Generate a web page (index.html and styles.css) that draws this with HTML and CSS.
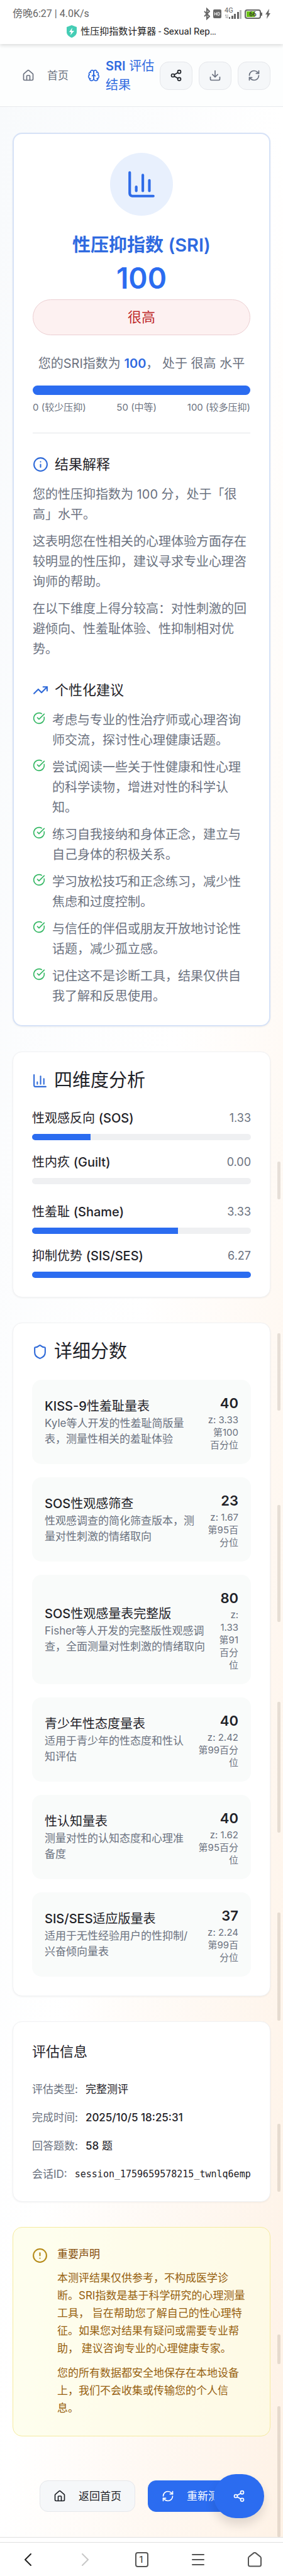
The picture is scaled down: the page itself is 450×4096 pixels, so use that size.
FILE: index.html
```
<!DOCTYPE html>
<html lang="zh-CN">
<head>
<meta charset="utf-8">
<meta name="viewport" content="width=device-width, initial-scale=1">
<title>性压抑指数计算器 - Sexual Repression Index</title>
<link rel="stylesheet" href="styles.css">
</head>
<body>
<svg class="sprite" aria-hidden="true">
  <symbol id="i-home" viewBox="0 0 24 24"><path d="M15 21v-8a1 1 0 0 0-1-1h-4a1 1 0 0 0-1 1v8"/><path d="M3 10a2 2 0 0 1 .709-1.528l7-5.999a2 2 0 0 1 2.582 0l7 5.999A2 2 0 0 1 21 10v9a2 2 0 0 1-2 2H5a2 2 0 0 1-2-2z"/></symbol>
  <symbol id="i-brain" viewBox="0 0 24 24"><path d="M12 5a3 3 0 1 0-5.997.125 4 4 0 0 0-2.526 5.77 4 4 0 0 0 .556 6.588A4 4 0 1 0 12 18Z"/><path d="M12 5a3 3 0 1 1 5.997.125 4 4 0 0 1 2.526 5.77 4 4 0 0 1-.556 6.588A4 4 0 1 1 12 18Z"/><path d="M15 13a4.5 4.5 0 0 1-3-4 4.5 4.5 0 0 1-3 4"/><path d="M17.599 6.5a3 3 0 0 0 .399-1.375"/><path d="M6.003 5.125A3 3 0 0 0 6.401 6.5"/><path d="M3.477 10.896a4 4 0 0 1 .585-.396"/><path d="M19.938 10.5a4 4 0 0 1 .585.396"/><path d="M6 18a4 4 0 0 1-1.967-.516"/><path d="M19.967 17.484A4 4 0 0 1 18 18"/></symbol>
  <symbol id="i-share" viewBox="0 0 24 24"><circle cx="18" cy="5" r="3"/><circle cx="6" cy="12" r="3"/><circle cx="18" cy="19" r="3"/><path d="M8.59 13.51l6.83 3.98M15.41 6.51l-6.82 3.98"/></symbol>
  <symbol id="i-download" viewBox="0 0 24 24"><path d="M12 15V3"/><path d="M21 15v4a2 2 0 0 1-2 2H5a2 2 0 0 1-2-2v-4"/><path d="m7 10 5 5 5-5"/></symbol>
  <symbol id="i-refresh" viewBox="0 0 24 24"><path d="M3 12a9 9 0 0 1 9-9 9.75 9.75 0 0 1 6.74 2.74L21 8"/><path d="M21 3v5h-5"/><path d="M21 12a9 9 0 0 1-9 9 9.75 9.75 0 0 1-6.74-2.74L3 16"/><path d="M8 16H3v5"/></symbol>
  <symbol id="i-chart" viewBox="0 0 24 24"><path d="M3 3v16a2 2 0 0 0 2 2h16"/><path d="M18 17V9"/><path d="M13 17V5"/><path d="M8 17v-3"/></symbol>
  <symbol id="i-info" viewBox="0 0 24 24"><circle cx="12" cy="12" r="10"/><path d="M12 16v-4M12 8h.01"/></symbol>
  <symbol id="i-alert" viewBox="0 0 24 24"><circle cx="12" cy="12" r="10"/><path d="M12 8v4M12 16h.01"/></symbol>
  <symbol id="i-trend" viewBox="0 0 24 24"><path d="M16 7h6v6"/><path d="m22 7-8.500 8.500-5-5L2 17"/></symbol>
  <symbol id="i-check" viewBox="0 0 24 24"><path d="M21.801 10A10 10 0 1 1 17 3.335"/><path d="m9 11 3 3L22 4"/></symbol>
  <symbol id="i-shield" viewBox="0 0 24 24"><path d="M20 13c0 5-3.5 7.5-7.66 8.95a1 1 0 0 1-.67-.01C7.5 20.5 4 18 4 13V6a1 1 0 0 1 1-1c2 0 4.5-1.2 6.24-2.72a1.17 1.17 0 0 1 1.52 0C14.51 3.81 17 5 19 5a1 1 0 0 1 1 1z"/></symbol>
</svg>

<header class="browser">
  <div class="status">
    <span>傍晚6:27 | 4.0K/s</span>
    <span class="status-icons">
      <svg width="10" height="20" viewBox="0 0 10 20" fill="none" stroke="#666" stroke-width="2"><path d="M1 6l8 8-4 4V2l4 4-8 8"/></svg>
      <svg width="13" height="14" viewBox="0 0 13 14"><rect width="13" height="14" rx="2" fill="#666"/><path d="M2.500 4.500v5M2.500 7h3M5.500 4.500v5M7.500 4.500v5h1c1.500 0 2-1 2-2.500s-.5-2.500-2-2.500z" fill="none" stroke="#fff" stroke-width="1"/></svg>
      <span class="signal"><small>4G</small><svg width="27" height="16" viewBox="0 0 27 16" fill="#666"><path d="M1 10l1.500-2v6M5 8v6l-1.500-2" fill="none" stroke="#aaa"/><rect x="7" y="12" width="2" height="3"/><rect x="11" y="10" width="3" height="5"/><rect x="15" y="7" width="3" height="8"/><rect x="20" y="4" width="3" height="11"/><rect x="24" y="1" width="3" height="14" fill="#bbb"/></svg></span>
      <span class="battery"><b>66</b></span>
      <svg width="8" height="16" viewBox="0 0 8 16" fill="#666"><path d="M6 0L0 9h3l-1 7 6-9H5z"/></svg>
    </span>
  </div>
  <div class="tab-title">
    <svg width="16" height="20" viewBox="0 0 16 20"><path d="M8 0l8 3v8c0 4-3 7-8 9-5-2-8-5-8-9V3z" fill="#45cdb5"/><path d="M9 4l-5 7h3l-1 5 6-7H8z" fill="#fff"/></svg>
    <span>性压抑指数计算器 - Sexual Rep…</span>
  </div>
</header>

<nav class="nav">
  <a class="nav-home" href="#"><svg class="icon"><use href="#i-home"/></svg><span>首页</span></a>
  <div class="brand"><svg class="icon"><use href="#i-brain"/></svg><span><b>SRI</b> 评估结果</span></div>
  <div class="tools">
    <button class="tool dark" type="button" aria-label="分享"><svg class="icon"><use href="#i-share"/></svg></button>
    <button class="tool" type="button" aria-label="下载"><svg class="icon"><use href="#i-download"/></svg></button>
    <button class="tool" type="button" aria-label="重新测评"><svg class="icon"><use href="#i-refresh"/></svg></button>
  </div>
</nav>

<main class="page">
  <section class="card hero">
    <div class="hero-icon"><svg class="icon xl"><use href="#i-chart"/></svg></div>
    <h1>性压抑指数 (SRI)</h1>
    <div class="score">100</div>
    <div class="level">很高</div>
    <p class="summary">您的SRI指数为 <strong>100</strong>， 处于 很高 水平</p>
    <div class="bar big"><div class="fill" style="width:100%"></div></div>
    <div class="scale"><span>0 (较少压抑)</span><span>50 (中等)</span><span>100 (较多压抑)</span></div>
    <hr>
    <h2 class="sub"><svg class="icon lg"><use href="#i-info"/></svg>结果解释</h2>
    <div class="prose">
      <p>您的性压抑指数为 100 分，处于「很高」水平。</p>
      <p>这表明您在性相关的心理体验方面存在较明显的性压抑，建议寻求专业心理咨询师的帮助。</p>
      <p>在以下维度上得分较高：对性刺激的回避倾向、性羞耻体验、性抑制相对优势。</p>
    </div>
    <h2 class="sub"><svg class="icon lg"><use href="#i-trend"/></svg>个性化建议</h2>
    <ul class="tips">
      <li><svg class="icon"><use href="#i-check"/></svg><span>考虑与专业的性治疗师或心理咨询师交流，探讨性心理健康话题。</span></li>
      <li><svg class="icon"><use href="#i-check"/></svg><span>尝试阅读一些关于性健康和性心理的科学读物，增进对性的科学认知。</span></li>
      <li><svg class="icon"><use href="#i-check"/></svg><span>练习自我接纳和身体正念，建立与自己身体的积极关系。</span></li>
      <li><svg class="icon"><use href="#i-check"/></svg><span>学习放松技巧和正念练习，减少性焦虑和过度控制。</span></li>
      <li><svg class="icon"><use href="#i-check"/></svg><span>与信任的伴侣或朋友开放地讨论性话题，减少孤立感。</span></li>
      <li><svg class="icon"><use href="#i-check"/></svg><span>记住这不是诊断工具，结果仅供自我了解和反思使用。</span></li>
    </ul>
  </section>

  <section class="card">
    <h2 class="title"><svg class="icon lg"><use href="#i-chart"/></svg>四维度分析</h2>
    <div class="groups">
      <div class="group">
        <div class="dim"><div class="dim-head"><span>性观感反向 <b>(SOS)</b></span><em>1.33</em></div><div class="bar"><div class="fill" style="width:26.6%"></div></div></div>
        <div class="dim"><div class="dim-head"><span>性内疚 <b>(Guilt)</b></span><em>0.00</em></div><div class="bar"><div class="fill" style="width:0%"></div></div></div>
      </div>
      <div class="group">
        <div class="dim"><div class="dim-head"><span>性羞耻 <b>(Shame)</b></span><em>3.33</em></div><div class="bar"><div class="fill" style="width:66.6%"></div></div></div>
        <div class="dim"><div class="dim-head"><span>抑制优势 <b>(SIS/SES)</b></span><em>6.27</em></div><div class="bar"><div class="fill" style="width:100%"></div></div></div>
      </div>
    </div>
  </section>

  <section class="card">
    <h2 class="title"><svg class="icon lg"><use href="#i-shield"/></svg>详细分数</h2>
    <div class="scales">
      <article class="item"><div class="item-text"><h3><b>KISS-9</b>性羞耻量表</h3><p>Kyle等人开发的性羞耻简版量<br>表，测量性相关的羞耻体验</p></div><div class="item-score"><strong>40</strong><span>z: 3.33<br>第100<br>百分位</span></div></article>
      <article class="item"><div class="item-text"><h3><b>SOS</b>性观感筛查</h3><p>性观感调查的简化筛查版本，测<br>量对性刺激的情绪取向</p></div><div class="item-score"><strong>23</strong><span>z: 1.67<br>第95百<br>分位</span></div></article>
      <article class="item"><div class="item-text"><h3><b>SOS</b>性观感量表完整版</h3><p>Fisher等人开发的完整版性观感调<br>查，全面测量对性刺激的情绪取向</p></div><div class="item-score"><strong>80</strong><span>z:<br>1.33<br>第91<br>百分<br>位</span></div></article>
      <article class="item"><div class="item-text"><h3>青少年性态度量表</h3><p>适用于青少年的性态度和性认<br>知评估</p></div><div class="item-score"><strong>40</strong><span>z: 2.42<br>第99百分<br>位</span></div></article>
      <article class="item"><div class="item-text"><h3>性认知量表</h3><p>测量对性的认知态度和心理准<br>备度</p></div><div class="item-score"><strong>40</strong><span>z: 1.62<br>第95百分<br>位</span></div></article>
      <article class="item"><div class="item-text"><h3><b>SIS/SES</b>适应版量表</h3><p>适用于无性经验用户的性抑制/<br>兴奋倾向量表</p></div><div class="item-score"><strong>37</strong><span>z: 2.24<br>第99百<br>分位</span></div></article>
    </div>
  </section>

  <section class="card">
    <h2 class="info-title">评估信息</h2>
    <dl class="info">
      <div><dt>评估类型:</dt><dd>完整测评</dd></div>
      <div><dt>完成时间:</dt><dd><b>2025/10/5 18:25:31</b></dd></div>
      <div><dt>回答题数:</dt><dd><b>58</b> 题</dd></div>
      <div><dt>会话ID:</dt><dd class="mono">session_1759659578215_twnlq6emp</dd></div>
    </dl>
  </section>

  <section class="card notice">
    <svg class="icon lg"><use href="#i-alert"/></svg>
    <div class="notice-body">
      <h3>重要声明</h3>
      <p>本测评结果仅供参考，不构成医学诊<br>断。SRI指数是基于科学研究的心理测量<br>工具， 旨在帮助您了解自己的性心理特<br>征。如果您对结果有疑问或需要专业帮<br>助， 建议咨询专业的心理健康专家。</p>
      <p>您的所有数据都安全地保存在本地设备<br>上，我们不会收集或传输您的个人信<br>息。</p>
    </div>
  </section>

  <div class="actions">
    <button class="btn" type="button"><svg class="icon"><use href="#i-home"/></svg>返回首页</button>
    <button class="btn primary" type="button"><svg class="icon"><use href="#i-refresh"/></svg>重新测评</button>
    <button class="fab" type="button" aria-label="分享结果"><svg class="icon"><use href="#i-share"/></svg></button>
  </div>
</main>

<footer class="toolbar">
  <button type="button" aria-label="后退"><svg width="24" height="24" viewBox="0 0 24 24" stroke="#222"><path d="M16 3L7 12l9 9"/></svg></button>
  <button type="button" aria-label="前进"><svg width="24" height="24" viewBox="0 0 24 24" stroke="#c8c8c8"><path d="M8 3l9 9-9 9"/></svg></button>
  <button type="button" aria-label="标签页"><span class="tabs">1</span></button>
  <button type="button" aria-label="菜单"><svg width="24" height="24" viewBox="0 0 24 24" stroke="#555"><path d="M3 4h18M3 12h18M3 20h18"/></svg></button>
  <button type="button" aria-label="主页"><svg width="24" height="24" viewBox="0 0 24 24" stroke="#555"><path d="M2 9.500c0-1 .3-1.500 1-2.100l7.500-6c1-.8 2-.8 3 0l7.500 6c.7.600 1 1.100 1 2.100V20c0 1.700-1 2.500-2.500 2.500h-15C3 22.500 2 21.700 2 20z"/></svg></button>
</footer>

<div class="thumb t1"></div><div class="thumb t2"></div><div class="thumb t3"></div><div class="thumb t4"></div>
<div class="thumb t5"></div><div class="thumb t6"></div><div class="thumb t7"></div><div class="thumb t8"></div>
</body>
</html>
```
FILE: styles.css
```
* { box-sizing: border-box; margin: 0; padding: 0; }

body {
  position: relative;
  background: #fff;
  color: #1f2228;
  font: 400 20px/32px Inter, "Noto Sans CJK SC", sans-serif;
}

button { font: inherit; color: inherit; border: 0; background: none; }
h1, h2, h3 { font-weight: 400; }
b { font-weight: 500; }

.sprite { display: none; }
.icon { width: 20px; height: 20px; flex: none; fill: none; stroke: currentColor; stroke-width: 2; stroke-linecap: round; stroke-linejoin: round; }
.icon.lg { width: 25px; height: 25px; }
.icon.xl { width: 50px; height: 50px; }

/* browser chrome */
.browser {
  position: relative;
  padding: 8px 20px 6px;
  background: #fff;
  box-shadow: 0 2px 6px rgba(0, 0, 0, .15);
  font: 400 15px/28px Roboto, "Noto Sans CJK SC", sans-serif;
}
.status { display: flex; justify-content: space-between; align-items: center; color: #666; font-size: 16px; }
.status-icons { display: flex; align-items: center; gap: 5px; }
.signal { position: relative; display: flex; align-items: flex-end; height: 18px; }
.signal small { position: absolute; left: 0; top: -2px; font-size: 11px; line-height: 11px; }
.battery {
  position: relative;
  width: 26px; height: 15px; margin-right: 2px;
  border: 2px solid #666; border-radius: 4px;
  background: linear-gradient(90deg, #6cc417 64%, #fff 64%);
  box-shadow: inset 0 0 0 1px #fff;
  text-align: center;
}
.battery::after { content: ""; position: absolute; right: -4px; top: 3px; width: 2px; height: 5px; background: #666; }
.battery b { display: block; font-size: 10px; line-height: 11px; color: #333; }
.tab-title { display: flex; justify-content: center; align-items: center; gap: 6px; font-size: 15px; color: #222; }

.nav {
  display: flex; align-items: center;
  padding: 20px 20px 19px 35px;
  border-bottom: 1px solid #e8eaed;
  background: #fdfefe;
}
.nav-home { display: flex; align-items: center; gap: 20px; color: #6b7280; font-size: 17px; text-decoration: none; white-space: nowrap; }
.brand { display: flex; align-items: center; gap: 9px; margin-left: 30px; flex: 1; color: #2f6be0; line-height: 30px; }
.brand b { font-weight: 600; }
.tools { display: flex; gap: 10px; }
.tool {
  display: flex; align-items: center; justify-content: center;
  width: 52px; height: 45px;
  border: 1px solid #e5e7eb; border-radius: 14px;
  background: #f5f7f9; color: #6b7280;
}
.tool.dark { color: #1f2228; }

.page {
  display: flex; flex-direction: column; gap: 40px;
  padding: 41px 20px 40px;
  background: linear-gradient(to bottom right, #f8fafc, #fff 50%, #fef2e6);
}

.card {
  padding: 30px;
  border: 1px solid #f1f2f4; border-radius: 15px;
  background: #fff;
  box-shadow: 0 1px 3px rgba(0, 0, 0, .06);
}
.card.hero { border: 2px solid #d6e2f7; }

.hero-icon { display: flex; align-items: center; justify-content: center; width: 100px; height: 100px; margin: 0 auto 30px; border-radius: 50%; background: #e8f0fd; color: #2f6ce8; }
h1 { font-size: 29px; line-height: 34px; font-weight: 600; text-align: center; color: #2f6ae0; }
.score { margin-top: 10px; font-size: 46px; line-height: 50px; font-weight: 600; text-align: center; color: #2b6cf0; }
.level { margin-top: 9px; padding: 11px; border: 1px solid #eccfd2; border-radius: 29px; background: #fdf1f1; color: #bf2c2c; font-size: 22px; line-height: 33px; text-align: center; }
.summary { margin-top: 29px; text-align: center; color: #6b7280; white-space: nowrap; }
.summary strong { font-weight: 600; color: #2f6ae0; }
.bar { height: 10px; border-radius: 5px; background: #eff0f2; overflow: hidden; }
.bar.big { height: 15px; margin-top: 19px; border-radius: 8px; }
.fill { height: 100%; background: #2b6cf0; }
.scale { display: flex; justify-content: space-between; margin-top: 10px; font-size: 15px; line-height: 20px; color: #6b7280; }
hr { margin: 30px 0 0; border: 0; border-top: 1px solid #e3e5e9; }
.sub { display: flex; align-items: center; gap: 10px; margin-top: 34px; font-size: 22px; line-height: 30px; }
.sub .icon, .title .icon { color: #2f6ad8; }
.prose { display: flex; flex-direction: column; gap: 11px; margin-top: 17px; color: #6b7280; }
.tips { display: flex; flex-direction: column; gap: 11px; margin-top: 17px; list-style: none; color: #6b7280; }
.tips li { display: flex; gap: 11px; }
.tips .icon { margin-top: 3px; color: #36b865; }

.title { display: flex; align-items: center; gap: 10px; margin-bottom: 30px; font-size: 29px; line-height: 30px; }
.groups { display: flex; flex-direction: column; gap: 29px; }
.group { display: flex; flex-direction: column; gap: 20px; }
.dim { display: flex; flex-direction: column; gap: 10px; }
.dim-head { display: flex; justify-content: space-between; line-height: 30px; }
.dim-head em { font-style: normal; font-size: 18px; color: #6b7280; }

.scales { display: flex; flex-direction: column; gap: 21px; }
.item { display: flex; justify-content: space-between; align-items: center; padding: 20px; border-radius: 15px; background: #f9fbfa; white-space: nowrap; }
.item h3 { font-size: 20px; line-height: 30px; }
.item p { font-size: 17px; line-height: 25px; color: #6b7280; }
.item-score { text-align: right; }
.item-score strong { display: block; font-size: 22px; line-height: 34px; font-weight: 600; }
.item-score span { display: block; font-size: 15px; line-height: 20px; color: #6b7280; }

.info-title { margin-bottom: 30px; font-size: 22px; line-height: 35px; }
.info { display: flex; flex-direction: column; gap: 20px; font-size: 17px; line-height: 25px; white-space: nowrap; }
.info div { display: flex; gap: 12px; }
.info dt { color: #6b7280; }
.info .mono { font: 400 15px/25px "DejaVu Sans Mono", monospace; }

.notice { display: flex; gap: 15px; border-color: #f5eb9f; background: rgba(253, 253, 226, .6); color: #96600f; box-shadow: none; font-size: 17px; line-height: 28px; }
.notice .icon { margin-top: 2px; color: #b58a18; }
.notice h3 { font-size: 17px; line-height: 25px; color: #854d0e; }
.notice p { margin-top: 11px; white-space: nowrap; }

.actions { position: relative; display: flex; justify-content: center; gap: 20px; margin-top: 30px; font-size: 17px; }
.btn { display: flex; align-items: center; gap: 20px; height: 50px; padding: 0 21px; border: 1px solid #e5e7eb; border-radius: 13px; background: #f5f7f9; white-space: nowrap; }
.btn.primary { border-color: #2b6cf0; background: #2b6cf0; color: #fff; }
.fab {
  position: absolute; right: 10px; top: -10px;
  display: flex; align-items: center; justify-content: center;
  width: 80px; height: 70px; border-radius: 35px;
  background: #2b6cf0; color: #fff;
  box-shadow: 0 10px 16px rgba(0, 0, 0, .12);
}

.toolbar { display: grid; grid-template-columns: repeat(5, 1fr); border-top: 1px solid #e0e0e0; padding-top: 7px; background: #fff; }
.toolbar button { display: flex; align-items: center; justify-content: center; height: 54px; border-top: 1px solid #e0e0e0; }
.toolbar svg { fill: none; stroke-width: 2; stroke-linecap: round; stroke-linejoin: round; }
.tabs { width: 21px; height: 24px; border: 2px solid #555; border-radius: 4px; font: 400 15px/20px Roboto, sans-serif; color: #333; text-align: center; }

/* scroll position marks over the right edge */
.thumb { position: absolute; right: 4px; width: 5px; border-radius: 2px; background: rgba(60, 40, 20, .12); }
.t1 { top: 1847px; height: 60px; }
.t2 { top: 2120px; height: 123px; }
.t3 { top: 2393px; height: 186px; }
.t4 { top: 2706px; height: 208px; }
.t5 { top: 3041px; height: 172px; }
.t6 { top: 3377px; height: 108px; }
.t7 { top: 3712px; height: 47px; }
.t8 { top: 3826px; height: 208px; }
```
